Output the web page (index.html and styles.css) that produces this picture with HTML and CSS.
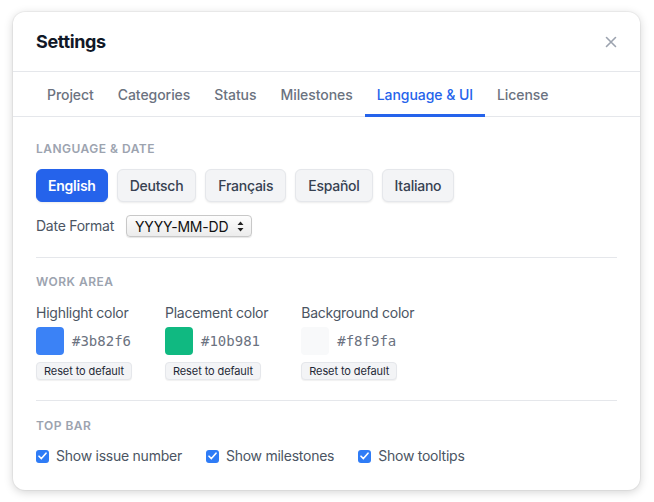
FILE: index.html
```html
<!DOCTYPE html>
<html lang="en">

<head>
	<meta charset="UTF-8">
	<title>Settings</title>
	<link rel="stylesheet" href="styles.css">
</head>

<body>
	<div class="modal">
		<div class="modal-header">
			<h2>Settings</h2>
			<button class="close-btn" aria-label="Close">
				<svg width="12" height="12" viewBox="0 0 12 12"><path d="M1.5 1.5l9 9M10.5 1.5l-9 9" stroke="#9ca3af" stroke-width="1.6" stroke-linecap="round"/></svg>
			</button>
		</div>
		<div class="tabs">
			<span class="tab">Project</span>
			<span class="tab">Categories</span>
			<span class="tab">Status</span>
			<span class="tab">Milestones</span>
			<span class="tab active">Language &amp; UI</span>
			<span class="tab">License</span>
		</div>
		<div class="modal-body">
			<div class="section first">
				<div class="section-title">Language &amp; Date</div>
				<div class="lang-row">
					<button class="lang-btn active">English</button>
					<button class="lang-btn">Deutsch</button>
					<button class="lang-btn">Français</button>
					<button class="lang-btn">Español</button>
					<button class="lang-btn">Italiano</button>
				</div>
				<div class="date-row">
					<span class="label">Date Format</span>
					<div class="select">
						<span>YYYY-MM-DD</span>
						<svg width="7" height="11" viewBox="0 0 7 11"><path d="M3.5 0.5L6.5 4H0.5z M3.5 10.5L6.5 7H0.5z" fill="#222"/></svg>
					</div>
				</div>
			</div>

			<div class="section">
				<div class="section-title">Work Area</div>
				<div class="colors">
					<div class="color-item">
						<div class="label">Highlight color</div>
						<div class="swatch-row">
							<span class="swatch" style="background:#3b82f6"></span>
							<span class="hex">#3b82f6</span>
						</div>
						<button class="reset-btn">Reset to default</button>
					</div>
					<div class="color-item">
						<div class="label">Placement color</div>
						<div class="swatch-row">
							<span class="swatch" style="background:#10b981"></span>
							<span class="hex">#10b981</span>
						</div>
						<button class="reset-btn">Reset to default</button>
					</div>
					<div class="color-item">
						<div class="label">Background color</div>
						<div class="swatch-row">
							<span class="swatch" style="background:#f8f9fa"></span>
							<span class="hex">#f8f9fa</span>
						</div>
						<button class="reset-btn">Reset to default</button>
					</div>
				</div>
			</div>

			<div class="section last">
				<div class="section-title">Top Bar</div>
				<div class="checks">
					<label class="check"><span class="box"><svg width="9" height="8" viewBox="0 0 9 8"><path d="M1 4.2l2.4 2.4L8 1.2" stroke="#fff" stroke-width="1.6" fill="none" stroke-linecap="round" stroke-linejoin="round"/></svg></span>Show issue number</label>
					<label class="check"><span class="box"><svg width="9" height="8" viewBox="0 0 9 8"><path d="M1 4.2l2.4 2.4L8 1.2" stroke="#fff" stroke-width="1.6" fill="none" stroke-linecap="round" stroke-linejoin="round"/></svg></span>Show milestones</label>
					<label class="check"><span class="box"><svg width="9" height="8" viewBox="0 0 9 8"><path d="M1 4.2l2.4 2.4L8 1.2" stroke="#fff" stroke-width="1.6" fill="none" stroke-linecap="round" stroke-linejoin="round"/></svg></span>Show tooltips</label>
				</div>
			</div>
		</div>
	</div>
</body>

</html>
```

FILE: styles.css
```css
body {
	font-family: Inter, "Noto Sans", sans-serif;
	margin: 0;
	padding: 12px 13px;
	background-color: #fff;
	color: #374151;
}

.modal {
	width: 627px;
	background-color: #fff;
	border-radius: 12px;
	box-shadow: 0 2px 10px rgba(0, 0, 0, 0.18), 0 0 0 1px rgba(0, 0, 0, 0.04);
}

.modal-header {
	height: 59px;
	padding: 0 23px;
	display: flex;
	align-items: center;
	justify-content: space-between;
	border-bottom: 1px solid #e5e7eb;
}

	.modal-header h2 {
		margin: 0;
		font-size: 18px;
		font-weight: 700;
		letter-spacing: -0.35px;
		color: #111827;
	}

.close-btn {
	background: none;
	border: none;
	padding: 0;
	display: flex;
	cursor: pointer;
}

.tabs {
	display: flex;
	padding: 0 22px;
	border-bottom: 1px solid #e5e7eb;
}

.tab {
	padding: 14px 12px 10px;
	font-size: 14px;
	line-height: 18px;
	font-weight: 500;
	letter-spacing: -0.06px;
	color: #6b7280;
	border-bottom: 3px solid transparent;
	margin-bottom: -1px;
}

	.tab.active {
		color: #2563eb;
		border-bottom-color: #2563eb;
	}

.modal-body {
	padding: 0 23px;
}

.section {
	padding: 16px 0 20px;
	border-top: 1px solid #e5e7eb;
}

	.section.first {
		border-top: none;
		padding-top: 24px;
	}

	.section.last {
		padding-top: 17px;
		padding-bottom: 24px;
	}

.section-title {
	font-size: 12px;
	line-height: 16px;
	font-weight: 600;
	letter-spacing: 0.04em;
	text-transform: uppercase;
	color: #9ca3af;
	margin-bottom: 13px;
}

.section.first .section-title,
.section.last .section-title {
	margin-bottom: 12px;
}

.lang-row {
	display: flex;
	gap: 9px;
}

.lang-btn {
	font-family: inherit;
	font-size: 14px;
	line-height: 19px;
	font-weight: 500;
	letter-spacing: -0.25px;
	padding: 6px 12px;
	border: 1px solid #e5e7eb;
	border-radius: 6px;
	background-color: #f3f4f6;
	color: #374151;
	box-shadow: 0 1px 2px rgba(0, 0, 0, 0.08);
}

	.lang-btn.active {
		padding: 6px 11px;
		background-color: #2563eb;
		border-color: #2563eb;
		color: #fff;
		font-weight: 600;
	}

.label {
	font-size: 14px;
	line-height: 20px;
	letter-spacing: -0.25px;
	color: #4b5563;
}

.date-row {
	display: flex;
	align-items: center;
	gap: 12px;
	margin-top: 13px;
}

.select {
	display: flex;
	align-items: center;
	gap: 9px;
	height: 20px;
	padding: 0 7px 0 8px;
	border: 1px solid #c8c8c8;
	border-radius: 4px;
	background: linear-gradient(#fdfdfd, #ececec);
	box-shadow: 0 1px 1px rgba(0, 0, 0, 0.1);
	font-size: 14px;
	letter-spacing: -0.2px;
	color: #111;
}

.colors {
	display: flex;
	gap: 33px;
}

.swatch-row {
	display: flex;
	align-items: center;
	gap: 8px;
	margin-top: 4px;
}

.swatch {
	width: 28px;
	height: 28px;
	border-radius: 4px;
}

.hex {
	font-family: "DejaVu Sans Mono", "Liberation Mono", monospace;
	font-size: 14px;
	color: #6b7280;
}

.reset-btn {
	margin-top: 7px;
	font-family: inherit;
	font-size: 11px;
	line-height: 14px;
	letter-spacing: -0.1px;
	padding: 1px 7px;
	border: 1px solid #e5e7eb;
	border-radius: 4px;
	background-color: #f3f4f6;
	color: #1f2937;
	box-shadow: 0 1px 1px rgba(0, 0, 0, 0.06);
}

.checks {
	display: flex;
	gap: 24px;
}

.check {
	display: flex;
	align-items: center;
	gap: 7px;
	font-size: 14px;
	line-height: 20px;
	letter-spacing: -0.25px;
	color: #4b5563;
}

.box {
	width: 13px;
	height: 13px;
	border-radius: 3px;
	background-color: #2f7cf6;
	display: flex;
	align-items: center;
	justify-content: center;
}
```
